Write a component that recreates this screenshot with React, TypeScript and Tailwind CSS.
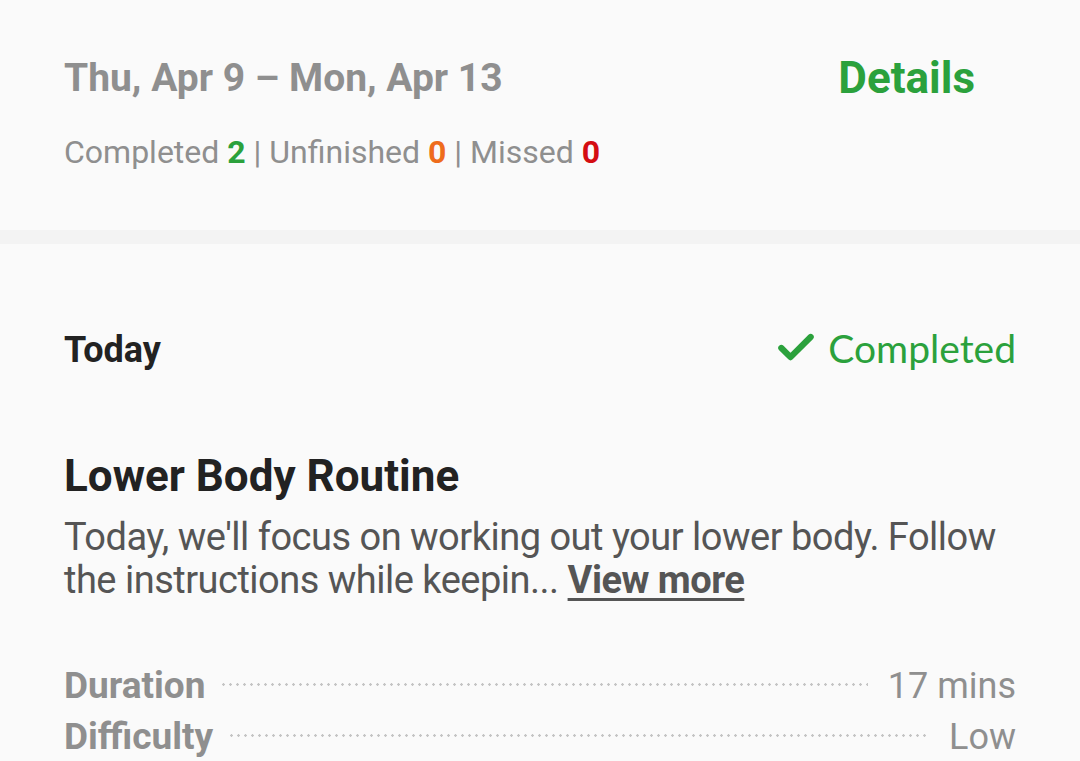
import { Check } from "lucide-react";

const stats = [
  { label: "Completed", value: 2, color: "text-[#2ba13c]" },
  { label: "Unfinished", value: 0, color: "text-[#ee6c1c]" },
  { label: "Missed", value: 0, color: "text-[#d40d12]" },
];

const details = [
  { label: "Duration", value: "17 mins" },
  { label: "Difficulty", value: "Low" },
];

export default function App() {
  return (
    <div className="h-[761px] w-[1080px] overflow-hidden bg-[#fafafa] font-['Roboto',sans-serif]">
      {/* Week summary */}
      <div className="h-[230px] px-16 pt-[52px]">
        <div className="flex items-center justify-between pr-[41px]">
          <h2 className="text-[39px] font-bold leading-[52px] text-[#8f8f8f]">
            Thu, Apr 9 – Mon, Apr 13
          </h2>
          <a className="text-[44px] font-bold leading-[52px] text-[#2ba13c]">Details</a>
        </div>
        <p className="mt-[28px] text-[32px] leading-[40px] text-[#8f8f8f]">
          {stats.map((s, i) => (
            <span key={s.label}>
              {i > 0 && " | "}
              {s.label} <span className={`font-bold ${s.color}`}>{s.value}</span>
            </span>
          ))}
        </p>
      </div>

      <div className="h-[14px] bg-[#f3f3f3]" />

      {/* Today card */}
      <div className="px-16 pt-[84px]">
        <div className="flex items-center justify-between">
          <h3 className="text-[36px] font-bold leading-[44px] text-[#222]">Today</h3>
          <div className="-mt-[4px] flex items-center gap-[10px] text-[#2ba13c]">
            <Check className="h-[44px] w-[44px]" strokeWidth={3.4} />
            <span className="font-['Lato',sans-serif] text-[39px] leading-[44px]">Completed</span>
          </div>
        </div>

        <h1 className="mt-[78px] text-[44px] font-bold leading-[52px] text-[#222]">
          Lower Body Routine
        </h1>
        <p className="mt-[14px] text-[38px] leading-[43px] tracking-[-0.5px] text-[#555]">
          Today, we'll focus on working out your lower body. Follow the instructions while keepin...{" "}
          <a className="font-bold underline decoration-[3px] underline-offset-[5px]">View more</a>
        </p>

        <div className="mt-[58px] flex flex-col">
          {details.map((d) => (
            <div key={d.label} className="flex h-[51px] items-center">
              <span className="text-[37px] font-bold text-[#8f8f8f]">{d.label}</span>
              <div className="mx-[15px] -mt-[2px] h-[3px] flex-1 bg-[radial-gradient(circle,#c4c4c4_1px,transparent_1.5px)] bg-[length:7px_3px]" />
              <span className="ml-[5px] text-[36px] text-[#8f8f8f]">{d.value}</span>
            </div>
          ))}
        </div>
      </div>
    </div>
  );
}
